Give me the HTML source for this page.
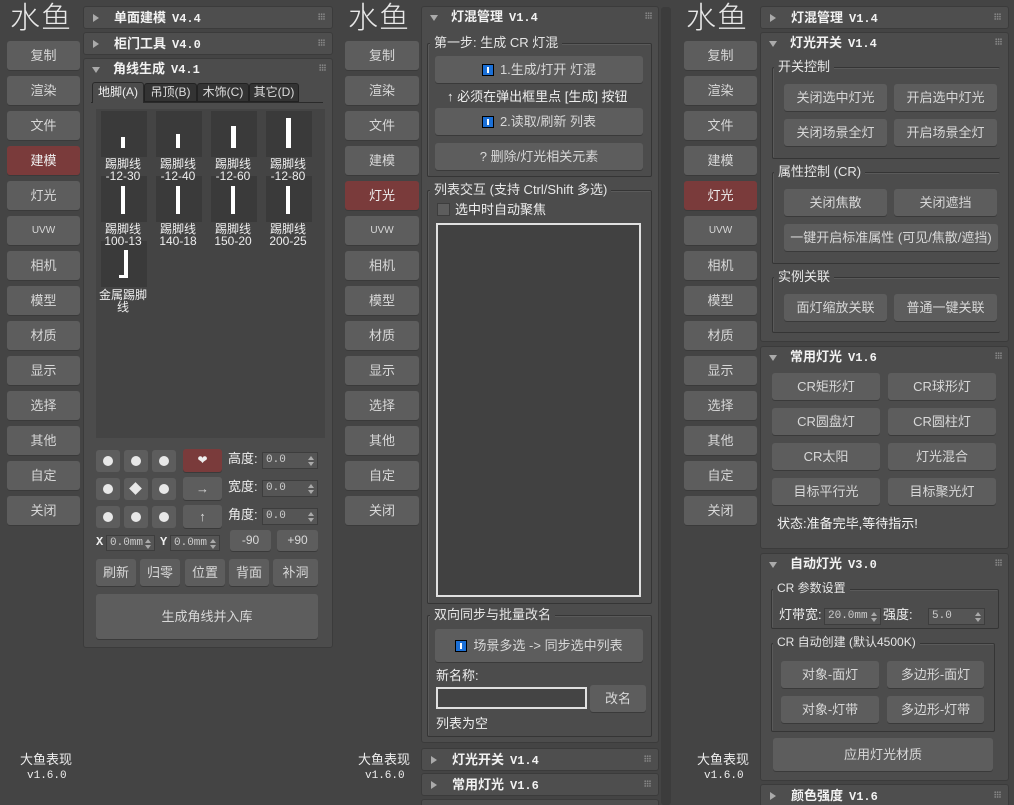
<!DOCTYPE html>
<html><head><meta charset="utf-8"><style>
*{box-sizing:border-box;margin:0;padding:0}
html,body{width:1014px;height:805px;overflow:hidden}
body{background:#444444;position:relative;font-family:"Liberation Sans","Noto Sans CJK SC",sans-serif;font-size:12px;line-height:1.2;color:#dcdcdc}
div,span{position:absolute}
.b{background:#5d5d5d;border-radius:3px;color:#d8d8d8;display:flex;align-items:center;justify-content:center;font-size:13px;box-shadow:0 1px 0 #3a3a3a}
.red{background:#7a3b3b;color:#eee}
.ro{background:#4c4c4c;border:1px solid #3b3b3b;border-radius:3px}
.hd{background:#4e4e4e;border:1px solid #3b3b3b;border-radius:3px;height:23px}
.hd .t{left:30px;top:3px;font-weight:bold;font-size:13px;color:#f2f2f2;white-space:nowrap}
.hd .t i{font-style:normal;font-family:"Liberation Mono",monospace;font-size:12px;margin-left:6px}
.hd .a{left:9px;top:7px;width:0;height:0;border-left:6px solid #aaa;border-top:4px solid transparent;border-bottom:4px solid transparent}
.hd .d{left:9px;top:9px;width:0;height:0;border-top:6px solid #aaa;border-left:4px solid transparent;border-right:4px solid transparent}
.hd .g{right:7px;top:6px;width:7px;height:7px;background-image:radial-gradient(#8a8a8a 0.8px,transparent 1px);background-size:2.4px 2.4px}
.gb{border:1px solid #353535;border-radius:2px;box-shadow:1px 1px 0 #5a5a5a inset}
.gl{background:#4c4c4c;padding:0 4px;font-size:13px;color:#e6e6e6;white-space:nowrap;top:-9px;left:4px}
.sb{font-size:13px;color:#d8d8d8}
.logo{font-family:"Liberation Sans","Noto Sans CJK SC",sans-serif;font-size:30px;line-height:34px;color:#e8e8e8;font-weight:300;letter-spacing:1px}
.tx{white-space:nowrap}
.sp{background:#555;border:1px solid #3d3d3d;color:#ccc;font-family:"Liberation Mono",monospace;font-size:11px;padding-left:3px;line-height:15px}
.sp:before{content:"";position:absolute;right:3px;top:3px;border-bottom:4px solid #aaa;border-left:3px solid transparent;border-right:3px solid transparent}
.sp:after{content:"";position:absolute;right:3px;top:9px;border-top:4px solid #aaa;border-left:3px solid transparent;border-right:3px solid transparent}
.tile{background:#3a3a3a;width:46px;height:46px}
.tl{width:60px;text-align:center;font-size:12px;line-height:12px;color:#eee}
.ic{width:12px;height:12px;background:#1a6fd6;border:1px solid #000;display:inline-block;position:relative;margin-right:6px;vertical-align:-1px}
.ic:after{content:"";position:absolute;left:4px;top:2px;width:2px;height:6px;background:#fff}
.dot{width:24px;height:22px;background:#5d5d5d;border-radius:3px}
.dot:after{content:"";position:absolute;left:7px;top:6px;width:10px;height:10px;border-radius:50%;background:#e8e8e8}
.ft1{font-size:13px;color:#eee;line-height:15px}
.ft2{font-family:'Liberation Mono',monospace;font-size:11px;color:#eee;line-height:13px}
</style></head><body>

<!-- ============ LEFT COLUMN ============ -->
<div class="logo tx" style="left:10px;top:2px">水鱼</div>
<div class="b" style="left:7px;top:41px;width:73px;height:29px">复制</div>
<div class="b" style="left:7px;top:76px;width:73px;height:29px">渲染</div>
<div class="b" style="left:7px;top:111px;width:73px;height:29px">文件</div>
<div class="b red" style="left:7px;top:146px;width:73px;height:29px">建模</div>
<div class="b" style="left:7px;top:181px;width:73px;height:29px">灯光</div>
<div class="b" style="left:7px;top:216px;width:73px;height:29px;font-size:10px">UVW</div>
<div class="b" style="left:7px;top:251px;width:73px;height:29px">相机</div>
<div class="b" style="left:7px;top:286px;width:73px;height:29px">模型</div>
<div class="b" style="left:7px;top:321px;width:73px;height:29px">材质</div>
<div class="b" style="left:7px;top:356px;width:73px;height:29px">显示</div>
<div class="b" style="left:7px;top:391px;width:73px;height:29px">选择</div>
<div class="b" style="left:7px;top:426px;width:73px;height:29px">其他</div>
<div class="b" style="left:7px;top:461px;width:73px;height:29px">自定</div>
<div class="b" style="left:7px;top:496px;width:73px;height:29px">关闭</div>
<div class="tx ft1" style="left:20px;top:752px">大鱼表现</div>
<div class="tx ft2" style="left:27px;top:770px">v1.6.0</div>

<div class="hd" style="left:83px;top:6px;width:250px"><span class="a"></span><span class="t">单面建模<i>V4.4</i></span><span class="g"></span></div>
<div class="hd" style="left:83px;top:32px;width:250px"><span class="a"></span><span class="t">柜门工具<i>V4.0</i></span><span class="g"></span></div>
<div class="ro" style="left:83px;top:58px;width:250px;height:590px">
  <div class="hd" style="left:-1px;top:-1px;width:250px;border:none;background:transparent"><span class="d"></span><span class="t">角线生成<i>V4.1</i></span><span class="g"></span></div>
  <div style="left:7px;top:43px;width:232px;height:1px;background:#2a2a2a"></div>
  <div class="tx" style="left:8px;top:23px;width:52px;height:21px;background:#4c4c4c;border:1px solid #2a2a2a;border-bottom:none;border-radius:3px 3px 0 0;text-align:center;line-height:19px;color:#eee;font-size:12px">地脚(A)</div>
  <div class="tx" style="left:60px;top:24px;width:53px;height:19px;background:#333;border:1px solid #222;border-radius:3px 3px 0 0;text-align:center;line-height:17px;color:#ddd">吊顶(B)</div>
  <div class="tx" style="left:113px;top:24px;width:52px;height:19px;background:#333;border:1px solid #222;border-radius:3px 3px 0 0;text-align:center;line-height:17px;color:#ddd">木饰(C)</div>
  <div class="tx" style="left:165px;top:24px;width:50px;height:19px;background:#333;border:1px solid #222;border-radius:3px 3px 0 0;text-align:center;line-height:17px;color:#ddd">其它(D)</div>
  <div style="left:12px;top:50px;width:229px;height:329px;background:#444"></div>
</div>
<!-- tiles -->
<div class="tile" style="left:101px;top:111px"><span style="left:20px;top:26px;width:4px;height:11px;background:#fff"></span></div>
<div class="tile" style="left:156px;top:111px"><span style="left:20px;top:23px;width:4px;height:14px;background:#fff"></span></div>
<div class="tile" style="left:211px;top:111px"><span style="left:20px;top:15px;width:5px;height:22px;background:#fff"></span></div>
<div class="tile" style="left:266px;top:111px"><span style="left:20px;top:7px;width:5px;height:30px;background:#fff"></span></div>
<div class="tile" style="left:101px;top:176px"><span style="left:20px;top:10px;width:4px;height:28px;background:#fff"></span></div>
<div class="tile" style="left:156px;top:176px"><span style="left:20px;top:10px;width:4px;height:28px;background:#fff"></span></div>
<div class="tile" style="left:211px;top:176px"><span style="left:20px;top:10px;width:4px;height:28px;background:#fff"></span></div>
<div class="tile" style="left:266px;top:176px"><span style="left:20px;top:10px;width:4px;height:28px;background:#fff"></span></div>
<div class="tile" style="left:101px;top:241px"><span style="left:23px;top:9px;width:4px;height:28px;background:#fff"></span><span style="left:18px;top:34px;width:9px;height:3px;background:#fff"></span></div>
<div class="tl tx" style="left:93px;top:158px">踢脚线<br>-12-30</div>
<div class="tl tx" style="left:148px;top:158px">踢脚线<br>-12-40</div>
<div class="tl tx" style="left:203px;top:158px">踢脚线<br>-12-60</div>
<div class="tl tx" style="left:258px;top:158px">踢脚线<br>-12-80</div>
<div class="tl tx" style="left:93px;top:223px">踢脚线<br>100-13</div>
<div class="tl tx" style="left:148px;top:223px">踢脚线<br>140-18</div>
<div class="tl tx" style="left:203px;top:223px">踢脚线<br>150-20</div>
<div class="tl tx" style="left:258px;top:223px">踢脚线<br>200-25</div>
<div class="tl tx" style="left:93px;top:289px">金属踢脚<br>线</div>

<!-- controls -->
<div class="dot" style="left:96px;top:450px"></div><div class="dot" style="left:124px;top:450px"></div><div class="dot" style="left:152px;top:450px"></div>
<div class="dot" style="left:96px;top:478px"></div>
<div style="left:124px;top:478px;width:24px;height:22px;background:#5d5d5d;border-radius:3px"><span style="left:7px;top:6px;width:9px;height:9px;background:#e8e8e8;transform:rotate(45deg)"></span></div>
<div class="dot" style="left:152px;top:478px"></div>
<div class="dot" style="left:96px;top:506px"></div><div class="dot" style="left:124px;top:506px"></div><div class="dot" style="left:152px;top:506px"></div>
<div class="b red" style="left:183px;top:449px;width:39px;height:23px;font-size:12px">❤</div>
<div class="b" style="left:183px;top:477px;width:39px;height:23px">→</div>
<div class="b" style="left:183px;top:505px;width:39px;height:23px">↑</div>
<div class="tx sb" style="left:228px;top:451px;color:#eee">高度:</div>
<div class="tx sb" style="left:228px;top:479px;color:#eee">宽度:</div>
<div class="tx sb" style="left:228px;top:507px;color:#eee">角度:</div>
<div class="sp" style="left:262px;top:452px;width:56px;height:17px">0.0</div>
<div class="sp" style="left:262px;top:480px;width:56px;height:17px">0.0</div>
<div class="sp" style="left:262px;top:508px;width:56px;height:17px">0.0</div>
<div class="tx" style="left:96px;top:535px;font-family:'Liberation Mono',monospace;font-weight:bold;color:#eee">X</div>
<div class="sp" style="left:106px;top:535px;width:49px;height:16px">0.0mm</div>
<div class="tx" style="left:160px;top:535px;font-family:'Liberation Mono',monospace;font-weight:bold;color:#eee">Y</div>
<div class="sp" style="left:170px;top:535px;width:50px;height:16px">0.0mm</div>
<div class="b" style="left:230px;top:530px;width:41px;height:21px;font-size:12px">-90</div>
<div class="b" style="left:277px;top:530px;width:41px;height:21px;font-size:12px">+90</div>
<div class="b" style="left:96px;top:559px;width:40px;height:27px">刷新</div>
<div class="b" style="left:140px;top:559px;width:40px;height:27px">归零</div>
<div class="b" style="left:185px;top:559px;width:40px;height:27px">位置</div>
<div class="b" style="left:229px;top:559px;width:40px;height:27px">背面</div>
<div class="b" style="left:273px;top:559px;width:45px;height:27px">补洞</div>
<div class="b" style="left:96px;top:594px;width:222px;height:45px">生成角线并入库</div>

<!-- ============ MIDDLE COLUMN ============ -->
<div class="logo tx" style="left:348px;top:2px">水鱼</div>
<div class="b" style="left:345px;top:41px;width:74px;height:29px">复制</div>
<div class="b" style="left:345px;top:76px;width:74px;height:29px">渲染</div>
<div class="b" style="left:345px;top:111px;width:74px;height:29px">文件</div>
<div class="b" style="left:345px;top:146px;width:74px;height:29px">建模</div>
<div class="b red" style="left:345px;top:181px;width:74px;height:29px">灯光</div>
<div class="b" style="left:345px;top:216px;width:74px;height:29px;font-size:10px">UVW</div>
<div class="b" style="left:345px;top:251px;width:74px;height:29px">相机</div>
<div class="b" style="left:345px;top:286px;width:74px;height:29px">模型</div>
<div class="b" style="left:345px;top:321px;width:74px;height:29px">材质</div>
<div class="b" style="left:345px;top:356px;width:74px;height:29px">显示</div>
<div class="b" style="left:345px;top:391px;width:74px;height:29px">选择</div>
<div class="b" style="left:345px;top:426px;width:74px;height:29px">其他</div>
<div class="b" style="left:345px;top:461px;width:74px;height:29px">自定</div>
<div class="b" style="left:345px;top:496px;width:74px;height:29px">关闭</div>
<div class="tx ft1" style="left:358px;top:752px">大鱼表现</div>
<div class="tx ft2" style="left:365px;top:770px">v1.6.0</div>

<div class="ro" style="left:421px;top:6px;width:238px;height:737px">
  <div class="hd" style="left:-1px;top:-1px;width:238px;border:none;background:transparent"><span class="d"></span><span class="t">灯混管理<i>V1.4</i></span><span class="g"></span></div>
</div>
<div class="gb" style="left:427px;top:43px;width:225px;height:134px"><span class="gl" style="left:2px">第一步: 生成 CR 灯混</span></div>
<div class="b" style="left:435px;top:56px;width:208px;height:27px"><span class="ic" style="position:relative"></span>1.生成/打开 灯混</div>
<div class="tx" style="left:447px;top:89px;font-size:13px;color:#eee">↑ 必须在弹出框里点 [生成] 按钮</div>
<div class="b" style="left:435px;top:108px;width:208px;height:27px"><span class="ic" style="position:relative"></span>2.读取/刷新 列表</div>
<div class="b" style="left:435px;top:143px;width:208px;height:27px">? 删除/灯光相关元素</div>
<div class="gb" style="left:427px;top:190px;width:225px;height:414px"><span class="gl" style="left:2px">列表交互 (支持 Ctrl/Shift 多选)</span></div>
<div style="left:437px;top:203px;width:13px;height:13px;background:#5d5d5d;border:1px solid #3d3d3d"></div>
<div class="tx sb" style="left:455px;top:202px;color:#eee">选中时自动聚焦</div>
<div style="left:436px;top:223px;width:205px;height:374px;background:#414141;border:2px solid #e0e0e0"></div>
<div class="gb" style="left:427px;top:615px;width:225px;height:122px"><span class="gl" style="left:2px">双向同步与批量改名</span></div>
<div class="b" style="left:435px;top:629px;width:208px;height:33px"><span class="ic" style="position:relative"></span>场景多选 -> 同步选中列表</div>
<div class="tx sb" style="left:436px;top:668px;color:#eee">新名称:</div>
<div style="left:436px;top:687px;width:151px;height:22px;background:#444;border:2px solid #e0e0e0"></div>
<div class="b" style="left:590px;top:685px;width:56px;height:27px">改名</div>
<div class="tx sb" style="left:436px;top:716px;color:#eee">列表为空</div>
<div class="hd" style="left:421px;top:748px;width:238px"><span class="a"></span><span class="t">灯光开关<i>V1.4</i></span><span class="g"></span></div>
<div class="hd" style="left:421px;top:773px;width:238px"><span class="a"></span><span class="t">常用灯光<i>V1.6</i></span><span class="g"></span></div>
<div class="hd" style="left:421px;top:799px;width:238px"></div>
<div style="left:661px;top:7px;width:10px;height:798px;background:#3c3c3c;border-radius:3px"></div>

<!-- ============ RIGHT COLUMN ============ -->
<div class="logo tx" style="left:686px;top:2px">水鱼</div>
<div class="b" style="left:684px;top:41px;width:73px;height:29px">复制</div>
<div class="b" style="left:684px;top:76px;width:73px;height:29px">渲染</div>
<div class="b" style="left:684px;top:111px;width:73px;height:29px">文件</div>
<div class="b" style="left:684px;top:146px;width:73px;height:29px">建模</div>
<div class="b red" style="left:684px;top:181px;width:73px;height:29px">灯光</div>
<div class="b" style="left:684px;top:216px;width:73px;height:29px;font-size:10px">UVW</div>
<div class="b" style="left:684px;top:251px;width:73px;height:29px">相机</div>
<div class="b" style="left:684px;top:286px;width:73px;height:29px">模型</div>
<div class="b" style="left:684px;top:321px;width:73px;height:29px">材质</div>
<div class="b" style="left:684px;top:356px;width:73px;height:29px">显示</div>
<div class="b" style="left:684px;top:391px;width:73px;height:29px">选择</div>
<div class="b" style="left:684px;top:426px;width:73px;height:29px">其他</div>
<div class="b" style="left:684px;top:461px;width:73px;height:29px">自定</div>
<div class="b" style="left:684px;top:496px;width:73px;height:29px">关闭</div>
<div class="tx ft1" style="left:697px;top:752px">大鱼表现</div>
<div class="tx ft2" style="left:704px;top:770px">v1.6.0</div>

<div class="hd" style="left:760px;top:6px;width:249px"><span class="a"></span><span class="t">灯混管理<i>V1.4</i></span><span class="g"></span></div>
<div class="ro" style="left:760px;top:32px;width:249px;height:310px">
  <div class="hd" style="left:-1px;top:-1px;width:249px;border:none;background:transparent"><span class="d"></span><span class="t">灯光开关<i>V1.4</i></span><span class="g"></span></div>
</div>
<div class="gb" style="left:772px;top:67px;width:228px;height:92px;border-right:none"><span class="gl" style="left:1px">开关控制</span></div>
<div class="b" style="left:784px;top:84px;width:103px;height:27px">关闭选中灯光</div>
<div class="b" style="left:894px;top:84px;width:103px;height:27px">开启选中灯光</div>
<div class="b" style="left:784px;top:119px;width:103px;height:27px">关闭场景全灯</div>
<div class="b" style="left:894px;top:119px;width:103px;height:27px">开启场景全灯</div>
<div class="gb" style="left:772px;top:172px;width:228px;height:92px;border-right:none"><span class="gl" style="left:1px">属性控制 (CR)</span></div>
<div class="b" style="left:784px;top:189px;width:103px;height:27px">关闭焦散</div>
<div class="b" style="left:894px;top:189px;width:103px;height:27px">关闭遮挡</div>
<div class="b" style="left:784px;top:224px;width:214px;height:27px">一键开启标准属性 (可见/焦散/遮挡)</div>
<div class="gb" style="left:772px;top:277px;width:228px;height:56px;border-right:none"><span class="gl" style="left:1px">实例关联</span></div>
<div class="b" style="left:784px;top:294px;width:103px;height:27px">面灯缩放关联</div>
<div class="b" style="left:894px;top:294px;width:103px;height:27px">普通一键关联</div>

<div class="ro" style="left:760px;top:346px;width:249px;height:203px">
  <div class="hd" style="left:-1px;top:-1px;width:249px;border:none;background:transparent"><span class="d"></span><span class="t">常用灯光<i>V1.6</i></span><span class="g"></span></div>
</div>
<div class="b" style="left:772px;top:373px;width:108px;height:27px">CR矩形灯</div>
<div class="b" style="left:888px;top:373px;width:108px;height:27px">CR球形灯</div>
<div class="b" style="left:772px;top:408px;width:108px;height:27px">CR圆盘灯</div>
<div class="b" style="left:888px;top:408px;width:108px;height:27px">CR圆柱灯</div>
<div class="b" style="left:772px;top:443px;width:108px;height:27px">CR太阳</div>
<div class="b" style="left:888px;top:443px;width:108px;height:27px">灯光混合</div>
<div class="b" style="left:772px;top:478px;width:108px;height:27px">目标平行光</div>
<div class="b" style="left:888px;top:478px;width:108px;height:27px">目标聚光灯</div>
<div class="tx sb" style="left:777px;top:516px;color:#f2f2f2">状态:准备完毕,等待指示!</div>

<div class="ro" style="left:760px;top:553px;width:249px;height:228px">
  <div class="hd" style="left:-1px;top:-1px;width:249px;border:none;background:transparent"><span class="d"></span><span class="t">自动灯光<i>V3.0</i></span><span class="g"></span></div>
</div>
<div class="gb" style="left:771px;top:589px;width:228px;height:40px"><span class="gl" style="left:1px;font-size:12px">CR 参数设置</span></div>
<div class="tx sb" style="left:779px;top:607px;color:#eee">灯带宽:</div>
<div class="sp" style="left:824px;top:608px;width:57px;height:17px">20.0mm</div>
<div class="tx sb" style="left:883px;top:607px;color:#eee">强度:</div>
<div class="sp" style="left:928px;top:608px;width:57px;height:17px">5.0</div>
<div class="gb" style="left:771px;top:643px;width:224px;height:89px"><span class="gl" style="left:1px;font-size:12px">CR 自动创建 (默认4500K)</span></div>
<div class="b" style="left:781px;top:661px;width:98px;height:27px">对象-面灯</div>
<div class="b" style="left:887px;top:661px;width:97px;height:27px">多边形-面灯</div>
<div class="b" style="left:781px;top:696px;width:98px;height:27px">对象-灯带</div>
<div class="b" style="left:887px;top:696px;width:97px;height:27px">多边形-灯带</div>
<div class="b" style="left:773px;top:738px;width:220px;height:33px">应用灯光材质</div>
<div class="hd" style="left:760px;top:784px;width:249px"><span class="a"></span><span class="t">颜色强度<i>V1.6</i></span><span class="g"></span></div>
</body></html>
